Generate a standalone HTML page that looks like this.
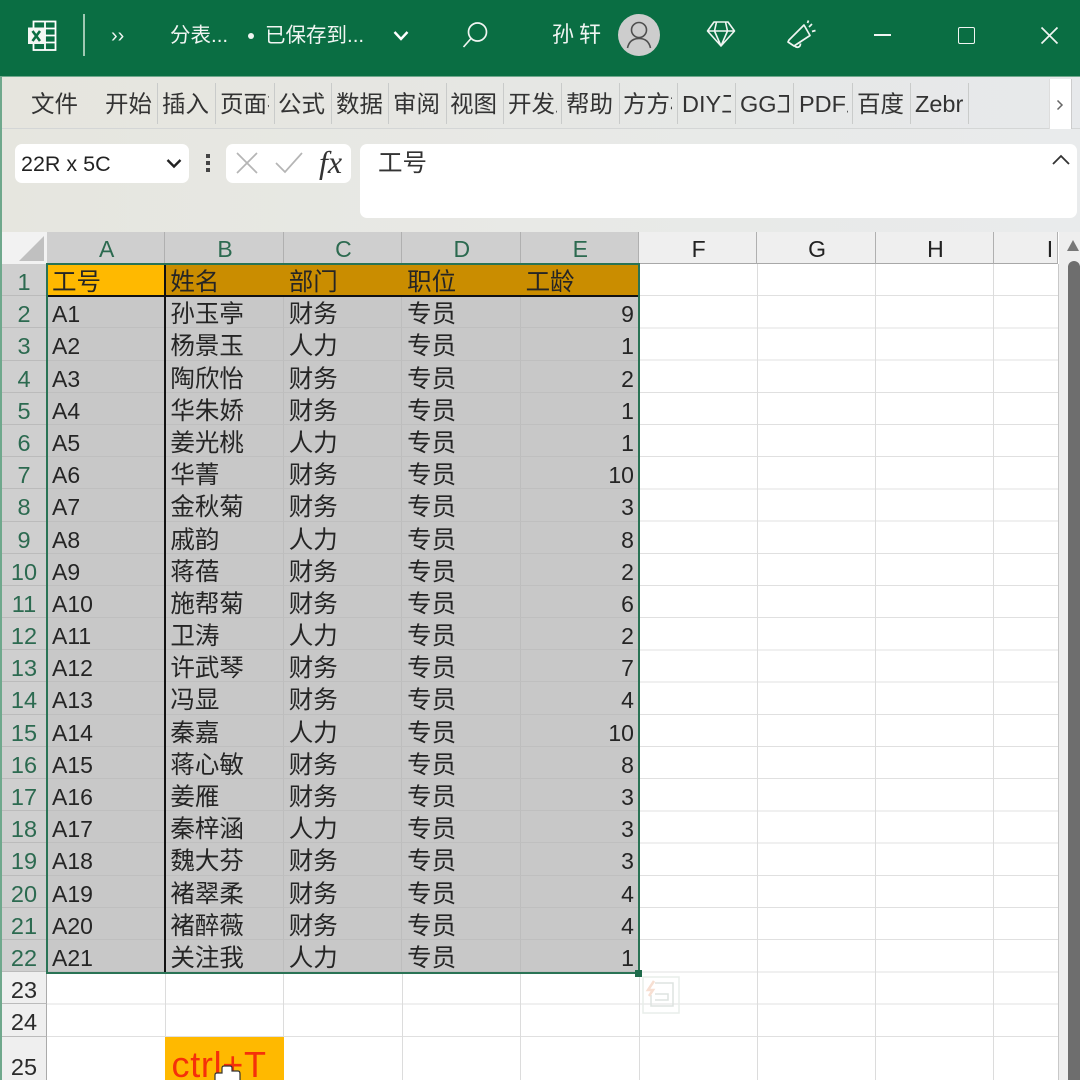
<!DOCTYPE html>
<html lang="zh">
<head>
<meta charset="utf-8">
<title>Excel</title>
<style>
html,body{margin:0;padding:0;}
body{width:1080px;height:1080px;overflow:hidden;background:#fff;position:relative;font-family:"Liberation Sans","Noto Sans CJK SC",sans-serif;color:#222;}
#wrap{position:absolute;left:0;top:0;width:1080px;height:1080px;overflow:hidden;filter:blur(.35px);}
.a{position:absolute;white-space:nowrap;}
#title{left:0;top:0;width:1080px;height:76px;background:#0a6e43;color:#f0f5f2;}
#rib{left:0;top:76px;width:1080px;height:53px;background:linear-gradient(90deg,#e6e5de,#e6e7e4 50%,#e7e9eb);border-top:1px solid #6fa88c;box-sizing:border-box;border-bottom:1px solid #d4d6d6;}
.tab{position:absolute;top:13px;width:49px;overflow:hidden;font-size:23.5px;line-height:28px;color:#333;white-space:nowrap;}
.sep{position:absolute;top:6px;width:1px;height:41px;background:#c9cbca;}
#fbar{left:0;top:129px;width:1080px;height:103px;background:linear-gradient(90deg,#e6e6df,#e8e9e6 50%,#e9ebec);}
.box{position:absolute;background:#fff;border-radius:7px;}
#hdrs{left:47px;top:232px;height:32px;display:grid;grid-template-columns:118.4px 118.4px 118.4px 118.4px 118.4px 118.4px 118.4px 118.4px 64px;}
#hdrs div{box-sizing:border-box;height:32px;line-height:35px;text-align:center;padding-left:2px;font-size:23px;border-right:1px solid #b0b0b0;border-bottom:1px solid #a8a8a8;}
#hdrs .s{background:#cfcfcf;color:#2c6a50;}
#hdrs .n{background:#efefef;color:#222;}
#rows{left:0;top:264px;width:47px;display:grid;grid-template-rows:repeat(24,32.2px) 44px;}
#rows div{box-sizing:border-box;text-align:center;padding-left:2px;font-size:23.5px;line-height:36px;border-bottom:1px solid #bbb;border-right:1px solid #aaa;}
#rows .s{background:#cfcfcf;color:#2c6a50;}
#rows .n{background:#efefef;color:#2b2b2b;}
#rows .t{line-height:60px;border-bottom:none;}
#empty{left:47px;top:264px;width:1011px;height:773px;background:repeating-linear-gradient(180deg,transparent 0,transparent 31.2px,#e0e0e0 31.2px,#e0e0e0 32.2px);}
.vl{position:absolute;top:264px;width:1px;height:816px;background:#dcdcdc;}
#g{left:47px;top:264px;display:grid;grid-template-columns:118.4px 118.4px 118.4px 118.4px 118.4px;grid-template-rows:repeat(22,32.2px);background:#c8c8c8;}
#g span{box-sizing:border-box;display:block;border-right:1px solid #bdbdbd;border-bottom:1px solid #bfbfbf;padding-left:5px;font-size:24.5px;line-height:38px;color:#252525;white-space:nowrap;overflow:hidden;}
#g span.l{font-size:23px;line-height:37px;}
#g span.r{text-align:right;padding-right:4px;padding-left:0;font-size:23px;line-height:37px;}
#g span.h1{background:#ca8d00;border-right:none;border-bottom:none;line-height:37px;}
#g span.h0{background:#ffb900;border-right:none;border-bottom:none;line-height:37px;}
</style>
</head>
<body>
<div id="wrap">

<div class="a" id="title">
<svg class="a" style="left:26px;top:19px" width="32" height="33" viewBox="0 0 32 33" fill="none" stroke="#fff" stroke-width="1.800">
<rect x="7.500" y="2.500" width="22" height="28.500" fill="#0a6e43"/>
<path d="M19 2.500V31M19 9.500H29.500M19 16.500H29.500M19 23.500H29.500"/>
<rect x="2" y="8.500" width="17" height="16.500" fill="#f3f7f4" stroke="none"/>
<path d="M6.500 12L14 22M14 12L6.500 22" stroke="#0a6e43" stroke-width="2.600"/>
</svg>
<div class="a" style="left:83px;top:14px;width:1.500px;height:42px;background:#9fc9b3"></div>
<div class="a" style="left:111px;top:24px;font-size:20px;line-height:24px">››</div>
<div class="a" style="left:170px;top:21px;font-size:20.500px;line-height:30px">分表...</div>
<div class="a" style="left:248px;top:33px;width:6px;height:6px;border-radius:50%;background:#f0f5f2"></div>
<div class="a" style="left:265px;top:21px;font-size:20.500px;line-height:30px">已保存到...</div>
<svg class="a" style="left:392px;top:29px" width="18" height="14" viewBox="0 0 18 14" fill="none" stroke="#fff" stroke-width="2.400"><path d="M2.500 3L9 10L15.500 3"/></svg>
<svg class="a" style="left:460px;top:20px" width="30" height="30" viewBox="0 0 30 30" fill="none" stroke="#f0f5f2" stroke-width="1.700"><circle cx="17.500" cy="12" r="9"/><path d="M11 18.500L3.500 27"/></svg>
<div class="a" style="left:552px;top:20px;font-size:22px;line-height:30px;letter-spacing:5px">孙轩</div>
<div class="a" style="left:618px;top:14px;width:42px;height:42px;border-radius:50%;background:#cdcdcd"></div>
<svg class="a" style="left:618px;top:14px" width="42" height="42" viewBox="0 0 42 42" fill="none" stroke="#4f4f4f" stroke-width="1.600"><circle cx="21" cy="16" r="7.500"/><path d="M9.500 34C11 27 15 24.500 21 24.500C27 24.500 31 27 32.500 34"/></svg>
<svg class="a" style="left:706px;top:20px" width="30" height="28" viewBox="0 0 30 28" fill="none" stroke="#f0f5f2" stroke-width="1.600" stroke-linejoin="round"><path d="M8 2H22L28.500 11L15 26L1.500 11ZM1.500 11H28.500M10.500 2L8.500 11L15 26L21.500 11L19.500 2"/></svg>
<svg class="a" style="left:785px;top:19px" width="32" height="32" viewBox="0 0 32 32" fill="none" stroke="#f0f5f2" stroke-width="1.700" stroke-linejoin="round"><path d="M19 6L25 16.500L9 27L3 23L4 21ZM9.500 26.500C11.500 29.500 15.500 28.500 15.500 24.500M24 8L27 5M27 12.500L30.500 11.500M22.500 4L23.500 1.500"/></svg>
<div class="a" style="left:874px;top:34px;width:17px;height:1.800px;background:#f0f5f2"></div>
<div class="a" style="left:958px;top:27px;width:14.500px;height:14.500px;border:1.800px solid #f0f5f2;border-radius:2px"></div>
<svg class="a" style="left:1040px;top:26px" width="19" height="19" viewBox="0 0 19 19" stroke="#f0f5f2" stroke-width="1.700"><path d="M1.500 1.500L17.500 17.500M17.500 1.500L1.500 17.500"/></svg>
</div>

<div class="a" id="rib">
<div class="tab" style="left:31px">文件</div>
<div class="tab" style="left:105px">开始</div>
<div class="sep" style="left:157px"></div>
<div class="tab" style="left:162px">插入</div>
<div class="sep" style="left:215px"></div>
<div class="tab" style="left:220px">页面布局</div>
<div class="sep" style="left:274px"></div>
<div class="tab" style="left:278px">公式</div>
<div class="sep" style="left:331px"></div>
<div class="tab" style="left:336px">数据</div>
<div class="sep" style="left:388px"></div>
<div class="tab" style="left:393px">审阅</div>
<div class="sep" style="left:446px"></div>
<div class="tab" style="left:450px">视图</div>
<div class="sep" style="left:503px"></div>
<div class="tab" style="left:508px">开发工具</div>
<div class="sep" style="left:561px"></div>
<div class="tab" style="left:566px">帮助</div>
<div class="sep" style="left:619px"></div>
<div class="tab" style="left:623px">方方格子</div>
<div class="sep" style="left:677px"></div>
<div class="tab" style="left:682px">DIY工具箱</div>
<div class="sep" style="left:735px"></div>
<div class="tab" style="left:740px">GG工具</div>
<div class="sep" style="left:793px"></div>
<div class="tab" style="left:799px">PDF工具</div>
<div class="sep" style="left:852px"></div>
<div class="tab" style="left:857px">百度网盘</div>
<div class="sep" style="left:910px"></div>
<div class="tab" style="left:915px">Zebra</div>
<div class="sep" style="left:968px"></div>
<div class="a" style="left:1049px;top:2px;width:21px;height:50px;background:#fff;border-right:1px solid #ccc;border-left:1px solid #ddd"></div>
<svg class="a" style="left:1054px;top:21px" width="12" height="14" viewBox="0 0 12 14" fill="none" stroke="#666" stroke-width="1.500"><path d="M3.500 2.500L8 7L3.500 11.500"/></svg>
</div>

<div class="a" id="fbar">
<div class="box" style="left:15px;top:15px;width:174px;height:39px"></div>
<div class="a" style="left:21px;top:20px;font-size:21.500px;line-height:30px;color:#222">22R x 5C</div>
<svg class="a" style="left:165px;top:28px" width="18" height="14" viewBox="0 0 18 14" fill="none" stroke="#222" stroke-width="2.400"><path d="M2.500 3L9 9.500L15.500 3"/></svg>
<div class="a" style="left:206px;top:25px;width:4px;height:4px;background:#444"></div>
<div class="a" style="left:206px;top:32px;width:4px;height:4px;background:#444"></div>
<div class="a" style="left:206px;top:39px;width:4px;height:4px;background:#444"></div>
<div class="box" style="left:226px;top:15px;width:125px;height:39px"></div>
<svg class="a" style="left:235px;top:22px" width="24" height="24" viewBox="0 0 24 24" stroke="#b5b5b5" stroke-width="1.700"><path d="M2 2L22 22M22 2L2 22"/></svg>
<svg class="a" style="left:274px;top:22px" width="30" height="24" viewBox="0 0 30 24" fill="none" stroke="#b5b5b5" stroke-width="1.700"><path d="M2 12L11 21L28 2"/></svg>
<div class="a" style="left:319px;top:14px;font-family:'Liberation Serif',serif;font-style:italic;font-size:32px;line-height:38px;color:#333">fx</div>
<div class="box" style="left:360px;top:15px;width:717px;height:74px"></div>
<div class="a" style="left:378px;top:18px;font-size:24.500px;line-height:34px;color:#333">工号</div>
<svg class="a" style="left:1051px;top:24px" width="20" height="14" viewBox="0 0 20 14" fill="none" stroke="#333" stroke-width="1.800"><path d="M2 11L10 3L18 11"/></svg>
</div>

<!-- corner -->
<div class="a" style="left:0;top:232px;width:47px;height:32px;background:#f2f2f2"></div>
<svg class="a" style="left:18px;top:235px" width="28" height="27" viewBox="0 0 28 27"><path d="M26 1V26H1Z" fill="#c0c0c0"/></svg>

<div class="a" id="hdrs">
<div class="s">A</div><div class="s">B</div><div class="s">C</div><div class="s">D</div><div class="s">E</div><div class="n">F</div><div class="n">G</div><div class="n">H</div><div class="n" style="text-align:right;padding-right:4px">I</div>
</div>

<div class="a" id="rows">
<div class="s">1</div><div class="s">2</div><div class="s">3</div><div class="s">4</div><div class="s">5</div><div class="s">6</div><div class="s">7</div><div class="s">8</div><div class="s">9</div><div class="s">10</div><div class="s">11</div><div class="s">12</div><div class="s">13</div><div class="s">14</div><div class="s">15</div><div class="s">16</div><div class="s">17</div><div class="s">18</div><div class="s">19</div><div class="s">20</div><div class="s">21</div><div class="s">22</div><div class="n">23</div><div class="n">24</div><div class="n t">25</div>
</div>

<div class="a" id="empty"></div>
<div class="vl" style="left:165px"></div>
<div class="vl" style="left:283px"></div>
<div class="vl" style="left:402px"></div>
<div class="vl" style="left:520px"></div>
<div class="vl" style="left:639px"></div>
<div class="vl" style="left:757px"></div>
<div class="vl" style="left:875px"></div>
<div class="vl" style="left:993px"></div>
<div class="vl" style="left:1058px;background:#c8c8c8"></div>

<div class="a" id="g">
<span class="h0">工号</span><span class="h1">姓名</span><span class="h1">部门</span><span class="h1">职位</span><span class="h1">工龄</span>
<span class="l">A1</span><span>孙玉亭</span><span>财务</span><span>专员</span><span class="r">9</span>
<span class="l">A2</span><span>杨景玉</span><span>人力</span><span>专员</span><span class="r">1</span>
<span class="l">A3</span><span>陶欣怡</span><span>财务</span><span>专员</span><span class="r">2</span>
<span class="l">A4</span><span>华朱娇</span><span>财务</span><span>专员</span><span class="r">1</span>
<span class="l">A5</span><span>姜光桃</span><span>人力</span><span>专员</span><span class="r">1</span>
<span class="l">A6</span><span>华菁</span><span>财务</span><span>专员</span><span class="r">10</span>
<span class="l">A7</span><span>金秋菊</span><span>财务</span><span>专员</span><span class="r">3</span>
<span class="l">A8</span><span>戚韵</span><span>人力</span><span>专员</span><span class="r">8</span>
<span class="l">A9</span><span>蒋蓓</span><span>财务</span><span>专员</span><span class="r">2</span>
<span class="l">A10</span><span>施帮菊</span><span>财务</span><span>专员</span><span class="r">6</span>
<span class="l">A11</span><span>卫涛</span><span>人力</span><span>专员</span><span class="r">2</span>
<span class="l">A12</span><span>许武琴</span><span>财务</span><span>专员</span><span class="r">7</span>
<span class="l">A13</span><span>冯显</span><span>财务</span><span>专员</span><span class="r">4</span>
<span class="l">A14</span><span>秦嘉</span><span>人力</span><span>专员</span><span class="r">10</span>
<span class="l">A15</span><span>蒋心敏</span><span>财务</span><span>专员</span><span class="r">8</span>
<span class="l">A16</span><span>姜雁</span><span>财务</span><span>专员</span><span class="r">3</span>
<span class="l">A17</span><span>秦梓涵</span><span>人力</span><span>专员</span><span class="r">3</span>
<span class="l">A18</span><span>魏大芬</span><span>财务</span><span>专员</span><span class="r">3</span>
<span class="l">A19</span><span>褚翠柔</span><span>财务</span><span>专员</span><span class="r">4</span>
<span class="l">A20</span><span>褚醉薇</span><span>财务</span><span>专员</span><span class="r">4</span>
<span class="l">A21</span><span>关注我</span><span>人力</span><span>专员</span><span class="r">1</span>
</div>

<!-- black borders and selection frame -->
<div class="a" style="left:48px;top:295px;width:590px;height:2px;background:#111"></div>
<div class="a" style="left:164px;top:265px;width:2px;height:707px;background:#111"></div>
<div class="a" style="left:46px;top:263px;width:590px;height:707px;border:2px solid #2a7355"></div>
<div class="a" style="left:635px;top:970px;width:7px;height:7px;background:#1f6b4b"></div>

<!-- watermark -->
<svg class="a" style="left:642px;top:976px" width="38" height="38" viewBox="0 0 38 38" fill="none" stroke="#e8eeea" stroke-width="1.500"><rect x="1" y="1" width="36" height="36"/><path d="M13 7H31V30H9V19M13 18H26V24H13" stroke="#dde3e0"/><path d="M12 5L6 14H11L7 20" stroke="#f7dfd2" stroke-width="2.500"/></svg>

<!-- ctrl+T -->
<div class="a" style="left:165px;top:1037px;width:119px;height:43px;background:#ffb900;color:#f5300a;font-size:36px;letter-spacing:.7px;line-height:56px;padding-left:6.500px;box-sizing:border-box;overflow:hidden">ctrl+T</div>
<svg class="a" style="left:212px;top:1062px" width="32" height="18" viewBox="0 0 32 18"><path d="M3 19V13Q3 11 5 11H10V6Q10 4 12 4H18Q20 4 20 6V9H26Q28 9 28 12V19Z" fill="#fff" stroke="#333" stroke-width="1.200"/></svg>

<!-- scrollbar -->
<div class="a" style="left:1059px;top:232px;width:21px;height:848px;background:#eeeeee"></div>
<div class="a" style="left:1067px;top:240px;width:0;height:0;border-left:6.500px solid transparent;border-right:6.500px solid transparent;border-bottom:11px solid #777"></div>
<div class="a" style="left:1068px;top:261px;width:12px;height:819px;background:#6e6e6e;border-radius:6px 6px 0 0"></div>

<!-- left window edge -->
<div class="a" style="left:0;top:76px;width:1.500px;height:1004px;background:#6fa88c"></div>
</div>
</body>
</html>
